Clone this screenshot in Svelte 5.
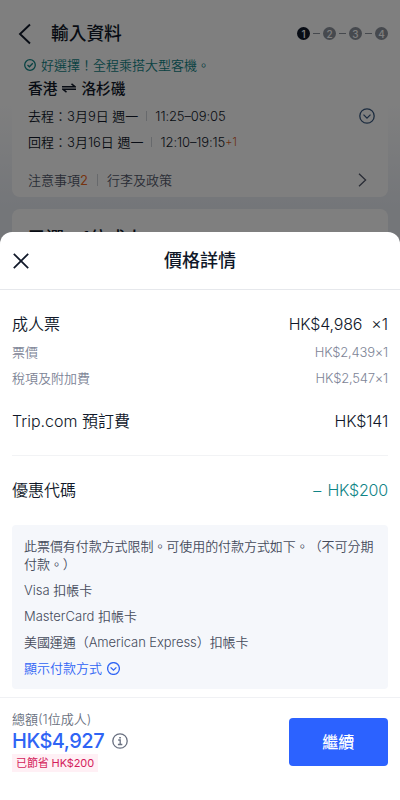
<script lang="ts">
	const steps = [1, 2, 3, 4];

	const flights = [
		{ label: '去程：', date: '3月9日', day: '週一', time: '11:25–09:05', extra: '' },
		{ label: '回程：', date: '3月16日', day: '週一', time: '12:10–19:15', extra: '+1' }
	];

	const details = [
		{ label: '票價', amount: 'HK$2,439×1' },
		{ label: '稅項及附加費', amount: 'HK$2,547×1' }
	];

	const cards = ['Visa 扣帳卡', 'MasterCard 扣帳卡', '美國運通（American Express）扣帳卡'];
</script>

<div class="screen">
	<div class="page">
		<header class="topbar">
			<svg class="back" width="14" height="22" viewBox="0 0 14 22">
				<path d="M12 1.5 2 11l10 9.5" />
			</svg>
			<h1>輸入資料</h1>
			<ol class="steps">
				{#each steps as step}
					<li class:active={step === 1}>{step}</li>
				{/each}
			</ol>
		</header>

		<section class="trip">
			<p class="good">
				<svg width="12" height="12" viewBox="0 0 12 12">
					<circle cx="6" cy="6" r="5.3" />
					<path d="m3.5 6 1.9 1.8 3.4-3.6" />
				</svg>
				<span>好選擇！全程乘搭大型客機。</span>
			</p>
			<h2>
				<span>香港</span>
				<svg width="14" height="10" viewBox="0 0 14 10">
					<path d="M0 3.7h13L9.5.8M14 6.3H1l3.5 2.9" />
				</svg>
				<span>洛杉磯</span>
			</h2>
			<div class="flights">
				<div>
					{#each flights as flight}
						<p class="flight">
							<span class="when">{flight.label}{flight.date} {flight.day}</span>
							<i></i>
							<span class="time">{flight.time}</span><sup>{flight.extra}</sup>
						</p>
					{/each}
				</div>
				<svg class="expand" width="16" height="16" viewBox="0 0 16 16">
					<circle cx="8" cy="8" r="7.2" />
					<path d="m4.5 6.6 3.5 3.5 3.5-3.5" />
				</svg>
			</div>
			<div class="policy">
				<span>注意事項<b>2</b></span>
				<i></i>
				<span>行李及政策</span>
				<svg width="9" height="14" viewBox="0 0 9 14">
					<path d="m1 .7 6.6 6.3L1 13.3" />
				</svg>
			</div>
		</section>

		<section class="passengers">
			<h2>已選：1位成人</h2>
		</section>
	</div>

	<div class="mask"></div>

	<div class="sheet">
		<div class="sheet-head">
			<svg width="16" height="16" viewBox="0 0 16 16">
				<path d="m.8.8 14.4 14.4M15.2.8.8 15.2" />
			</svg>
			<h3>價格詳情</h3>
		</div>

		<div class="sheet-body">
			<div class="row main">
				<span class="label">成人票</span>
				<span class="adult"><span class="amount">HK$4,986</span><span>×1</span></span>
			</div>
			{#each details as item}
				<div class="row sub">
					<span class="label">{item.label}</span>
					<span class="amount">{item.amount}</span>
				</div>
			{/each}
			<div class="row main fee">
				<span class="label">Trip.com 預訂費</span>
				<span class="amount">HK$141</span>
			</div>
			<div class="row main promo">
				<span class="label">優惠代碼</span>
				<span class="amount discount">– HK$200</span>
			</div>

			<div class="notice">
				<p class="limit">此票價有付款方式限制。可使用的付款方式如下。（不可分期付款。）</p>
				{#each cards as card}
					<p>{card}</p>
				{/each}
				<p class="more">
					<span>顯示付款方式</span>
					<svg width="13" height="13" viewBox="0 0 13 13">
						<circle cx="6.5" cy="6.5" r="5.9" />
						<path d="m3.6 5.4 2.9 2.8 2.9-2.8" />
					</svg>
				</p>
			</div>
		</div>

		<footer>
			<div class="total">
				<span class="total-label">總額(1位成人)</span>
				<div class="price">
					<strong>HK$4,927</strong>
					<svg width="16" height="16" viewBox="0 0 16 16">
						<circle cx="8" cy="8" r="7.2" />
						<path d="M6.2 7h2v4.4M5.9 11.5h4.4" />
						<path class="dot" d="M7.2 3.9h1.7v1.5H7.2z" />
					</svg>
				</div>
				<span class="saved">已節省 HK$200</span>
			</div>
			<button>繼續</button>
		</footer>
	</div>
</div>

<style>
	:global(body) {
		margin: 0;
	}
	.screen {
		position: relative;
		width: 400px;
		height: 800px;
		overflow: hidden;
		color: #101829;
		font-family: Inter, 'Noto Sans CJK TC', sans-serif;
		font-size: 13px;
		font-weight: 350;
		text-spacing-trim: space-all;
	}
	h1,
	h2,
	h3,
	p,
	ol {
		margin: 0;
		padding: 0;
	}
	svg {
		display: block;
		flex: none;
		fill: none;
		stroke: currentColor;
		stroke-width: 1.3;
	}
	.page {
		height: 800px;
		background: linear-gradient(#fff 100px, #e8ecf3 210px);
	}
	.topbar {
		display: flex;
		align-items: center;
		height: 56px;
		padding: 11px 12px 0 18px;
		box-sizing: border-box;
	}
	.back {
		stroke-width: 1.9;
	}
	h1 {
		flex: 1;
		margin-left: 19px;
		font-size: 17.7px;
		font-weight: 500;
		line-height: 24px;
	}
	.steps {
		display: flex;
		list-style: none;
	}
	.steps li {
		display: flex;
		align-items: center;
		justify-content: center;
		width: 13px;
		height: 13px;
		border-radius: 50%;
		background: #8d929c;
		color: #fff;
		font-size: 10px;
		font-weight: 500;
		position: relative;
	}
	.steps li + li {
		margin-left: 13px;
	}
	.steps li + li::before {
		content: '';
		position: absolute;
		left: -10px;
		top: 6px;
		width: 7px;
		height: 1px;
		background: #8d929c;
	}
	.steps .active {
		background: #101829;
	}
	.trip {
		height: 141px;
		margin: 0 12px;
		padding: 0 16px;
		box-sizing: border-box;
		border-radius: 0 0 8px 8px;
		background: #fff;
	}
	.good {
		display: flex;
		align-items: center;
		gap: 5px;
		height: 18px;
		margin-left: -4px;
		color: #108486;
	}
	.good span {
		padding-bottom: 2px;
	}
	.trip h2 {
		display: flex;
		align-items: center;
		gap: 5px;
		height: 27px;
		font-size: 14.7px;
		font-weight: 500;
	}
	.trip h2 svg {
		stroke-width: 1.5;
	}
	.flights {
		display: flex;
		justify-content: space-between;
		padding-top: 2px;
	}
	.flight {
		display: flex;
		align-items: center;
		height: 26px;
	}
	.when {
		padding-bottom: 2px;
	}
	i {
		width: 1px;
		height: 10px;
		margin: 0 8px;
		background: #ced2d9;
	}
	.time {
		letter-spacing: -0.1px;
	}
	sup {
		color: #d65a20;
		font-size: 11px;
		line-height: 1;
		vertical-align: baseline;
	}
	.expand {
		margin: 5px -3px 0 0;
		width: 16px;
		color: #38587f;
	}
	.policy {
		display: flex;
		align-items: center;
		height: 26px;
		margin-top: 12px;
		color: #53596b;
	}
	.policy span {
		padding-bottom: 2px;
	}
	.policy b {
		color: #ee6820;
		font-weight: 400;
	}
	.policy i {
		height: 12px;
		margin: 0 9px;
	}
	.policy svg {
		margin: 0 5px 0 auto;
	}
	.passengers {
		height: 80px;
		margin: 12px 12px 0;
		padding: 18px 16px;
		border-radius: 8px;
		background: #fff;
	}
	.passengers h2 {
		font-size: 18px;
		font-weight: 500;
		line-height: 24px;
	}
	.mask {
		position: absolute;
		inset: 0;
		background: rgba(0, 0, 0, 0.5);
	}
	.sheet {
		position: absolute;
		left: 0;
		right: 0;
		bottom: 0;
		height: 568px;
		display: flex;
		flex-direction: column;
		border-radius: 12px 12px 0 0;
		background: #fff;
	}
	.sheet-head {
		display: flex;
		align-items: center;
		height: 58px;
		padding: 0 13px;
		box-sizing: border-box;
		border-bottom: 1px solid #e6e8ec;
	}
	.sheet-head svg {
		stroke-width: 1.7;
	}
	h3 {
		flex: 1;
		margin-right: 16px;
		font-size: 18px;
		font-weight: 500;
		line-height: 24px;
		text-align: center;
	}
	.sheet-body {
		flex: 1;
		padding: 19px 12px 0;
	}
	.row {
		display: flex;
		align-items: center;
		justify-content: space-between;
	}
	.label {
		padding-bottom: 2px;
	}
	.amount {
		letter-spacing: -0.2px;
	}
	.main {
		height: 30px;
		font-size: 16px;
	}
	.adult {
		display: flex;
		gap: 9px;
	}
	.sub {
		height: 26px;
		color: #7d8496;
	}
	.fee {
		height: 57px;
		padding: 1px 0 6px;
		border-bottom: 1px solid #f2f3f5;
	}
	.promo {
		height: 68px;
		padding-bottom: 1px;
	}
	.discount {
		color: #108486;
		word-spacing: 2px;
	}
	.notice {
		height: 164px;
		padding: 12px 12px 0;
		box-sizing: border-box;
		border-radius: 4px;
		background: #f5f7fb;
		color: #454b5c;
	}
	.notice p {
		margin-bottom: 8px;
		line-height: 18px;
	}
	.notice .limit {
		letter-spacing: -0.06px;
	}
	.notice p:nth-last-child(2) {
		letter-spacing: -0.07px;
	}
	.notice .more {
		display: flex;
		align-items: center;
		gap: 5px;
		color: #2f64f5;
	}
	footer {
		display: flex;
		justify-content: space-between;
		height: 103px;
		padding: 12px 12px 0;
		box-sizing: border-box;
		border-top: 1px solid #f0f1f4;
	}
	.total {
		display: flex;
		flex-direction: column;
		align-items: flex-start;
	}
	.total-label {
		color: #697080;
		line-height: 18px;
	}
	.price {
		display: flex;
		align-items: center;
		gap: 8px;
		height: 26px;
		color: #697080;
	}
	strong {
		color: #2f64f5;
		font-size: 20px;
		font-weight: 500;
		letter-spacing: -0.5px;
	}
	.dot {
		fill: currentColor;
		stroke: none;
	}
	.saved {
		height: 18px;
		padding: 0 4px;
		background: #fff0f5;
		color: #d41c5b;
		font-size: 11px;
		font-weight: 400;
		line-height: 18px;
		letter-spacing: -0.12px;
	}
	button {
		width: 99.5px;
		height: 48px;
		margin-top: 8px;
		padding: 0 0 2px;
		border: 0;
		border-radius: 4px;
		background: #2c62ff;
		color: #fff;
		font: 500 16px Inter, 'Noto Sans CJK TC', sans-serif;
	}
</style>
